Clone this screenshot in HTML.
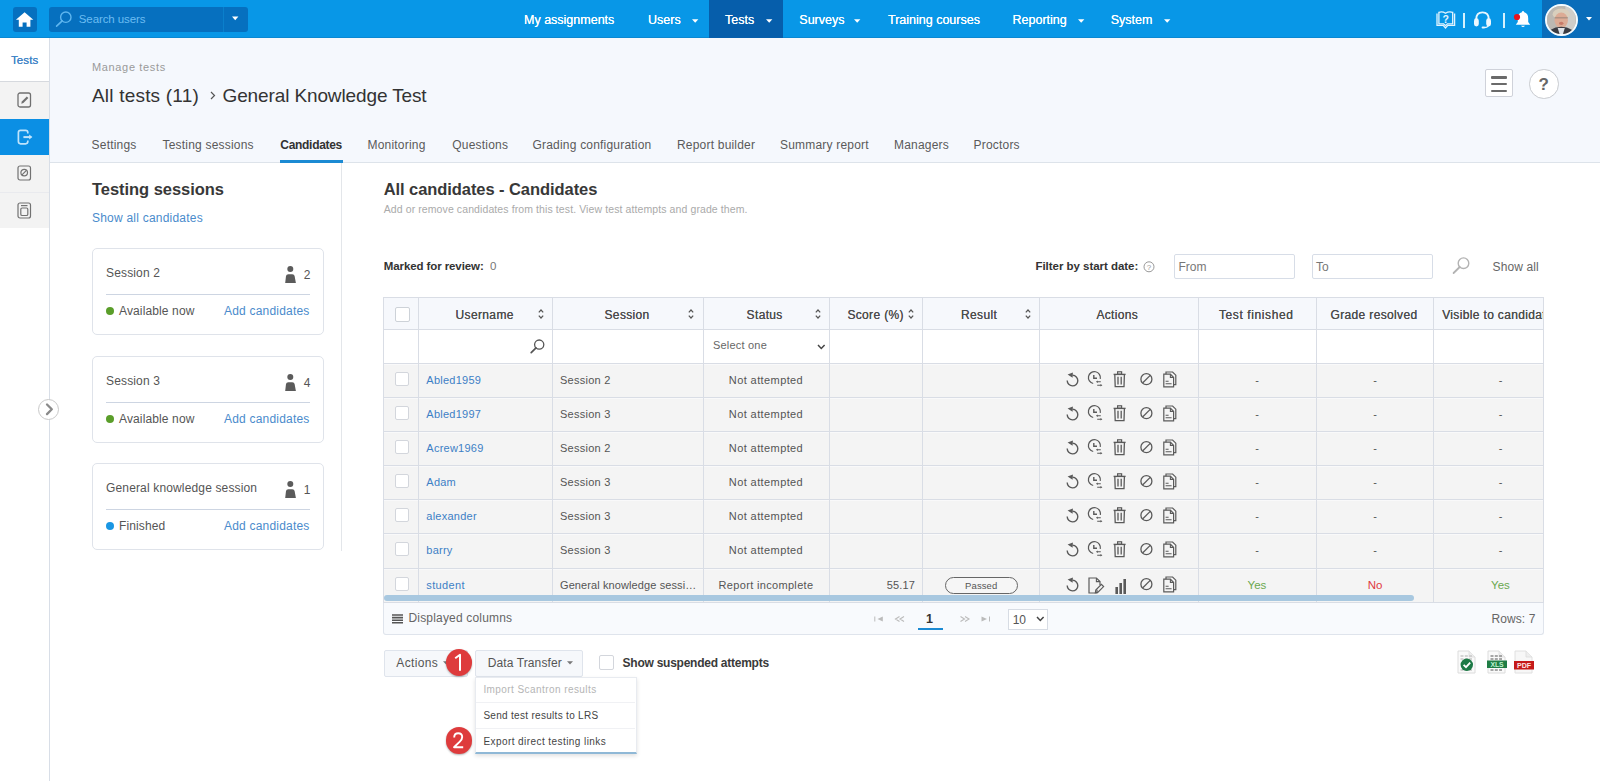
<!DOCTYPE html>
<html><head><meta charset="utf-8"><title>Candidates</title>
<style>
html,body{margin:0;padding:0;width:1600px;height:781px;overflow:hidden;background:#fff;font-family:"Liberation Sans", sans-serif;}
.t{position:absolute;white-space:nowrap;line-height:1;}
.b{position:absolute;box-sizing:border-box;}
svg.b{overflow:visible;}
</style></head><body>
<div class="b" style="left:50px;top:38px;width:1550px;height:124px;background:#f5f8fd;"></div><div class="b" style="left:50px;top:162px;width:1550px;height:1px;background:#dde3ea;"></div><div class="b" style="left:0px;top:38px;width:49px;height:43px;background:#fff;"></div><div class="b" style="left:0px;top:81px;width:49px;height:1px;background:#d6d9de;"></div><div class="b" style="left:0px;top:82px;width:49px;height:37px;background:#f3f3f3;"></div><div class="b" style="left:0px;top:119px;width:49px;height:36px;background:#0b8fe4;"></div><div class="b" style="left:0px;top:155px;width:49px;height:37px;background:#f3f3f3;"></div><div class="b" style="left:0px;top:192px;width:49px;height:1px;background:#e9eaee;"></div><div class="b" style="left:0px;top:193px;width:49px;height:35px;background:#f3f3f3;"></div><div class="b" style="left:49px;top:38px;width:1px;height:743px;background:#d8dee7;"></div><div class="b" style="left:341px;top:163px;width:1px;height:388px;background:#e3e6ea;"></div><div class="b" style="left:0px;top:0px;width:1600px;height:38px;background:#0897e7;"></div><div class="b" style="left:0px;top:37px;width:1600px;height:1px;background:#0a88d2;"></div><div class="b" style="left:13px;top:7px;width:24px;height:25px;background:#0670bf;border-radius:3px;"></div><svg class="b" style="left:13px;top:7px;" width="24" height="25" viewBox="0 0 24 25"><path d="M11.6 5.2 L20.3 12.8 L17.4 12.8 L17.4 19.8 L13.6 19.8 L13.6 15.4 L9.6 15.4 L9.6 19.8 L5.8 19.8 L5.8 12.8 L2.9 12.8 Z" fill="#fff"/></svg><div class="b" style="left:49px;top:7px;width:199px;height:25px;background:#0670bf;border-radius:3px;"></div><div class="b" style="left:223px;top:7px;width:1px;height:25px;background:#0a80cc;"></div><svg class="b" style="left:55px;top:11px;" width="18" height="16" viewBox="0 0 18 16"><circle cx="10.8" cy="6.2" r="5.2" fill="none" stroke="#5fb6ef" stroke-width="1.4"/><path d="M7.2 9.8 L1.6 15.2" stroke="#5fb6ef" stroke-width="1.6" stroke-linecap="round"/></svg><div class="t " style="left:78.8px;top:14.47px;font-size:11.5px;color:#6cbdf2;letter-spacing:-0.1px;">Search users</div><svg class="b" style="left:232px;top:16px;" width="7" height="5" viewBox="0 0 7 5"><path d="M0 0.5 L6.4 0.5 L3.2 4.2 Z" fill="#fff"/></svg><div class="b" style="left:709px;top:0px;width:74px;height:38px;background:#065eab;"></div><div class="t " style="left:524px;top:13.62px;font-size:12.5px;color:#fff;text-shadow:0 0 0.3px #fff;">My assignments</div><div class="t " style="left:648px;top:13.62px;font-size:12.5px;color:#fff;text-shadow:0 0 0.3px #fff;">Users</div><svg class="b" style="left:692px;top:18.5px;" width="7" height="5" viewBox="0 0 7 5"><path d="M0 0.3 L6.4 0.3 L3.2 3.8 Z" fill="#fff"/></svg><div class="t " style="left:725px;top:13.62px;font-size:12.5px;color:#fff;text-shadow:0 0 0.3px #fff;">Tests</div><svg class="b" style="left:766px;top:18.5px;" width="7" height="5" viewBox="0 0 7 5"><path d="M0 0.3 L6.4 0.3 L3.2 3.8 Z" fill="#fff"/></svg><div class="t " style="left:799.3px;top:13.62px;font-size:12.5px;color:#fff;text-shadow:0 0 0.3px #fff;">Surveys</div><svg class="b" style="left:853.5px;top:18.5px;" width="7" height="5" viewBox="0 0 7 5"><path d="M0 0.3 L6.4 0.3 L3.2 3.8 Z" fill="#fff"/></svg><div class="t " style="left:888px;top:13.62px;font-size:12.5px;color:#fff;text-shadow:0 0 0.3px #fff;">Training courses</div><div class="t " style="left:1012.5px;top:13.62px;font-size:12.5px;color:#fff;text-shadow:0 0 0.3px #fff;">Reporting</div><svg class="b" style="left:1078px;top:18.5px;" width="7" height="5" viewBox="0 0 7 5"><path d="M0 0.3 L6.4 0.3 L3.2 3.8 Z" fill="#fff"/></svg><div class="t " style="left:1110.7px;top:13.62px;font-size:12.5px;color:#fff;text-shadow:0 0 0.3px #fff;">System</div><svg class="b" style="left:1163.5px;top:18.5px;" width="7" height="5" viewBox="0 0 7 5"><path d="M0 0.3 L6.4 0.3 L3.2 3.8 Z" fill="#fff"/></svg><svg class="b" style="left:1436px;top:11px;" width="20" height="19" viewBox="0 0 20 19"><path d="M1 2.6 L1 14.4 L7.2 14.4 L9.5 17 L11.8 14.4 L18.6 14.4 L18.6 2.6" fill="none" stroke="#e3f4fe" stroke-width="1.3"/><path d="M2.9 1.3 Q6.4 0.2 9.5 2.2 Q12.6 0.2 16.7 1.3 L16.7 12.8 L11.4 12.8 L9.5 14.6 L7.6 12.8 L2.9 12.8 Z" fill="none" stroke="#e3f4fe" stroke-width="1.3"/><text x="9.7" y="11.8" font-size="10.5" font-weight="bold" font-family="Liberation Sans" fill="#e3f4fe" text-anchor="middle">?</text></svg><div class="b" style="left:1463px;top:13px;width:2px;height:14.5px;background:#d5f1fd;"></div><svg class="b" style="left:1473px;top:11px;" width="19" height="18" viewBox="0 0 19 18"><path d="M3.2 10 L3.2 8.6 Q3.2 1.4 9.5 1.4 Q15.8 1.4 15.8 8.6 L15.8 10" fill="none" stroke="#e8f6fe" stroke-width="1.9"/><rect x="1" y="7.3" width="4.8" height="8.2" rx="2.4" fill="#eef8fe"/><rect x="13.2" y="7.3" width="4.8" height="8.2" rx="2.4" fill="#eef8fe"/><path d="M15.6 14 Q15.2 16.4 11 16.6" fill="none" stroke="#e8f6fe" stroke-width="1.5"/><rect x="8.6" y="15.6" width="3.2" height="2" rx="1" fill="#e8f6fe"/></svg><div class="b" style="left:1503px;top:13px;width:2px;height:14.5px;background:#d5f1fd;"></div><svg class="b" style="left:1515px;top:10px;" width="16" height="19" viewBox="0 0 16 19"><path d="M8 1 Q9 1 9.1 2.3 Q13.2 3.4 13.2 8.4 L13.2 12 L15.2 14.8 L0.8 14.8 L2.8 12 L2.8 8.4 Q2.8 3.4 6.9 2.3 Q7 1 8 1 Z" fill="#fdfeff"/><path d="M6 15.8 Q8 18.4 10 15.8 Z" fill="#fdfeff"/><circle cx="2" cy="7" r="3.1" fill="#e8141c"/></svg><div class="b" style="left:1542px;top:0px;width:58px;height:38px;background:#0a6dba;"></div><div class="b" style="left:1545px;top:3.5px;width:32.5px;height:32.5px;border-radius:50%;border:2px solid #f4fbff;background:#bdb9b4;overflow:hidden;"><svg width="28.5" height="28.5" viewBox="0 0 28 28" style="position:absolute;left:0;top:0;filter:blur(0.5px)"><rect x="0" y="0" width="28" height="28" fill="#bcb8b2"/><rect x="18" y="0" width="10" height="28" fill="#cfcdc9"/><ellipse cx="14" cy="8" rx="8.5" ry="5.5" fill="#d9cfbd"/><ellipse cx="14" cy="14" rx="6.6" ry="7.6" fill="#dcab95"/><rect x="7.5" y="10.8" width="13" height="1.5" fill="#8d7d74" opacity="0.55"/><ellipse cx="14" cy="17" rx="2.2" ry="1.6" fill="#c87a68"/><ellipse cx="14" cy="30" rx="14.5" ry="9.5" fill="#3b3c43"/><path d="M10.5 21.5 L17.5 21.5 L15.5 28 L12.5 28 Z" fill="#dfe3e8"/></svg></div><svg class="b" style="left:1586px;top:16.5px;" width="7" height="4" viewBox="0 0 7 4"><path d="M0 0 L6 0 L3 3.6 Z" fill="#fff"/></svg><div class="t " style="left:11px;top:54.57px;font-size:11.5px;color:#4184c6;letter-spacing:0.1px;text-shadow:0 0 0.4px #4184c6;">Tests</div><svg class="b" style="left:17px;top:92px;" width="15" height="16" viewBox="0 0 15 16"><rect x="1" y="1" width="12.5" height="14" rx="2" fill="none" stroke="#707070" stroke-width="1.3"/><path d="M4.3 11.8 L4.8 9.4 L9.8 4.4 L11.4 6 L6.4 11 Z" fill="#707070"/></svg><svg class="b" style="left:17px;top:129px;" width="17" height="17" viewBox="0 0 17 17"><path d="M10.8 4.6 L10.8 3.6 Q10.8 1.4 8.6 1.4 L3.6 1.4 Q1.4 1.4 1.4 3.6 L1.4 12.6 Q1.4 14.8 3.6 14.8 L8.6 14.8 Q10.8 14.8 10.8 12.6 L10.8 11.4" fill="none" stroke="#bfe4fc" stroke-width="1.7"/><path d="M6.4 8.1 L14.2 8.1" stroke="#bfe4fc" stroke-width="2"/><path d="M12.2 5.6 L15.4 8.1 L12.2 10.6 Z" fill="#bfe4fc"/></svg><svg class="b" style="left:17px;top:165px;" width="15" height="16" viewBox="0 0 15 16"><rect x="1" y="1" width="12.5" height="14" rx="2" fill="none" stroke="#727272" stroke-width="1.2"/><circle cx="7.2" cy="7.6" r="3.3" fill="none" stroke="#727272" stroke-width="1.2"/><path d="M5 9.8 L9.4 5.4" stroke="#727272" stroke-width="1.2"/></svg><svg class="b" style="left:17px;top:202px;" width="15" height="17" viewBox="0 0 15 17"><rect x="1" y="1" width="12.5" height="15" rx="2" fill="none" stroke="#727272" stroke-width="1.2"/><path d="M4 3.6 L10.5 3.6" stroke="#727272" stroke-width="1.2"/><rect x="3.8" y="6" width="7" height="7.5" rx="1.3" fill="none" stroke="#727272" stroke-width="1.2"/></svg><div class="b" style="left:38px;top:399px;width:21px;height:21px;border-radius:50%;border:1px solid #c9c9c9;background:#fff;"></div><svg class="b" style="left:45px;top:403px;" width="9" height="13" viewBox="0 0 9 13"><path d="M2 1.5 L6.8 6.3 L2 11.1" fill="none" stroke="#8a8a8a" stroke-width="2.3" stroke-linecap="round" stroke-linejoin="round"/></svg><div class="t " style="left:92px;top:62.09px;font-size:11px;color:#9a9a9a;letter-spacing:0.65px;">Manage tests</div><div class="t " style="left:92px;top:85.72px;font-size:19px;color:#333;letter-spacing:0.2px;">All tests (11)</div><svg class="b" style="left:210px;top:91px;" width="6" height="9" viewBox="0 0 6 9"><path d="M1 1 L4.5 4.5 L1 8" fill="none" stroke="#555" stroke-width="1.2"/></svg><div class="t " style="left:222.5px;top:85.72px;font-size:19px;color:#333;letter-spacing:-0.12px;">General Knowledge Test</div><div class="b" style="left:1485px;top:69px;width:28px;height:28px;background:#fff;border:1px solid #cfd2da;border-radius:2px;"></div><div class="b" style="left:1491px;top:76px;width:15.5px;height:2.6px;background:#6a6a6a;border-radius:1px;"></div><div class="b" style="left:1491px;top:82.8px;width:15.5px;height:2.6px;background:#6a6a6a;border-radius:1px;"></div><div class="b" style="left:1491px;top:89.5px;width:15.5px;height:2.6px;background:#6a6a6a;border-radius:1px;"></div><div class="b" style="left:1529px;top:69px;width:29.5px;height:29.5px;border-radius:50%;border:1px solid #c8cbd0;background:#fff;"></div><div class="t " style="left:1529px;top:76.11px;font-size:17px;color:#666;font-weight:bold;width:29.5px;text-align:center;">?</div><div class="t " style="left:91.6px;top:139.04px;font-size:12px;color:#5a5a5a;letter-spacing:0.2px;">Settings</div><div class="t " style="left:162.5px;top:139.04px;font-size:12px;color:#5a5a5a;letter-spacing:0.2px;">Testing sessions</div><div class="t " style="left:280.3px;top:139.04px;font-size:12px;color:#333;font-weight:bold;letter-spacing:-0.3px;">Candidates</div><div class="t " style="left:367.5px;top:139.04px;font-size:12px;color:#5a5a5a;letter-spacing:0.2px;">Monitoring</div><div class="t " style="left:452.3px;top:139.04px;font-size:12px;color:#5a5a5a;letter-spacing:0.2px;">Questions</div><div class="t " style="left:532.5px;top:139.04px;font-size:12px;color:#5a5a5a;letter-spacing:0.2px;">Grading configuration</div><div class="t " style="left:677px;top:139.04px;font-size:12px;color:#5a5a5a;letter-spacing:0.2px;">Report builder</div><div class="t " style="left:780px;top:139.04px;font-size:12px;color:#5a5a5a;letter-spacing:0.2px;">Summary report</div><div class="t " style="left:894px;top:139.04px;font-size:12px;color:#5a5a5a;letter-spacing:0.2px;">Managers</div><div class="t " style="left:973.5px;top:139.04px;font-size:12px;color:#5a5a5a;letter-spacing:0.2px;">Proctors</div><div class="b" style="left:280px;top:160px;width:63px;height:2.5px;background:#1b8ad3;"></div><div class="t " style="left:92px;top:181.33px;font-size:16.5px;color:#383838;font-weight:bold;letter-spacing:-0.05px;">Testing sessions</div><div class="t " style="left:92px;top:211.84px;font-size:12px;color:#4a8bcc;letter-spacing:0.22px;">Show all candidates</div><div class="b" style="left:92px;top:248px;width:232px;height:87px;border:1px solid #dfe3ea;border-radius:5px;background:#fff;"></div><div class="t " style="left:106px;top:266.84px;font-size:12px;color:#555;letter-spacing:0.15px;">Session 2</div><svg class="b" style="left:285px;top:266px;" width="12" height="17" viewBox="0 0 12 17"><circle cx="5.3" cy="3.1" r="3" fill="#5b5b5b"/><path d="M0.2 17 L1.0 10 Q1.3 8.2 3.3 8.2 L7.3 8.2 Q9.3 8.2 9.6 10 L10.9 17 Z" fill="#5b5b5b"/></svg><div class="t " style="left:303.7px;top:268.84px;font-size:12px;color:#555;">2</div><div class="b" style="left:106px;top:294px;width:204px;height:1px;background:#cdd5e2;"></div><div class="b" style="left:106px;top:307px;width:8px;height:8px;border-radius:50%;background:#5a9e2a;"></div><div class="t " style="left:119px;top:304.84px;font-size:12px;color:#555;letter-spacing:0.13px;">Available now</div><div class="t " style="left:160px;top:304.84px;font-size:12px;color:#4a8bcc;letter-spacing:0.2px;width:149.5px;text-align:right;">Add candidates</div><div class="b" style="left:92px;top:356px;width:232px;height:87px;border:1px solid #dfe3ea;border-radius:5px;background:#fff;"></div><div class="t " style="left:106px;top:374.84px;font-size:12px;color:#555;letter-spacing:0.15px;">Session 3</div><svg class="b" style="left:285px;top:374px;" width="12" height="17" viewBox="0 0 12 17"><circle cx="5.3" cy="3.1" r="3" fill="#5b5b5b"/><path d="M0.2 17 L1.0 10 Q1.3 8.2 3.3 8.2 L7.3 8.2 Q9.3 8.2 9.6 10 L10.9 17 Z" fill="#5b5b5b"/></svg><div class="t " style="left:303.7px;top:376.84px;font-size:12px;color:#555;">4</div><div class="b" style="left:106px;top:402px;width:204px;height:1px;background:#cdd5e2;"></div><div class="b" style="left:106px;top:415px;width:8px;height:8px;border-radius:50%;background:#5a9e2a;"></div><div class="t " style="left:119px;top:412.84px;font-size:12px;color:#555;letter-spacing:0.13px;">Available now</div><div class="t " style="left:160px;top:412.84px;font-size:12px;color:#4a8bcc;letter-spacing:0.2px;width:149.5px;text-align:right;">Add candidates</div><div class="b" style="left:92px;top:463px;width:232px;height:87px;border:1px solid #dfe3ea;border-radius:5px;background:#fff;"></div><div class="t " style="left:106px;top:481.84px;font-size:12px;color:#555;letter-spacing:0.15px;">General knowledge session</div><svg class="b" style="left:285px;top:481px;" width="12" height="17" viewBox="0 0 12 17"><circle cx="5.3" cy="3.1" r="3" fill="#5b5b5b"/><path d="M0.2 17 L1.0 10 Q1.3 8.2 3.3 8.2 L7.3 8.2 Q9.3 8.2 9.6 10 L10.9 17 Z" fill="#5b5b5b"/></svg><div class="t " style="left:303.7px;top:483.84px;font-size:12px;color:#555;">1</div><div class="b" style="left:106px;top:509px;width:204px;height:1px;background:#cdd5e2;"></div><div class="b" style="left:106px;top:522px;width:8px;height:8px;border-radius:50%;background:#1a96e3;"></div><div class="t " style="left:119px;top:519.84px;font-size:12px;color:#555;letter-spacing:0.13px;">Finished</div><div class="t " style="left:160px;top:519.84px;font-size:12px;color:#4a8bcc;letter-spacing:0.2px;width:149.5px;text-align:right;">Add candidates</div><div class="t " style="left:383.7px;top:181.23px;font-size:16.5px;color:#383838;font-weight:bold;letter-spacing:-0.07px;">All candidates - Candidates</div><div class="t " style="left:383.7px;top:203.61px;font-size:10.5px;color:#aaa;letter-spacing:0.1px;">Add or remove candidates from this test. View test attempts and grade them.</div><div class="t " style="left:383.8px;top:260.97px;font-size:11.5px;color:#333;font-weight:bold;letter-spacing:-0.1px;">Marked for review:</div><div class="t " style="left:490px;top:261.47px;font-size:11.5px;color:#777;">0</div><div class="t " style="left:1035.4px;top:260.67px;font-size:11.5px;color:#333;font-weight:bold;letter-spacing:-0.03px;">Filter by start date:</div><svg class="b" style="left:1143px;top:261px;" width="12" height="12" viewBox="0 0 12 12"><circle cx="6" cy="5.8" r="5" fill="none" stroke="#999" stroke-width="1"/><text x="6" y="9" font-size="8" font-family="Liberation Sans" fill="#999" text-anchor="middle">?</text></svg><div class="b" style="left:1174px;top:254px;width:121px;height:24.5px;border:1px solid #d7dde7;border-radius:2px;background:#fff;"></div><div class="t " style="left:1178.5px;top:260.84px;font-size:12px;color:#777;">From</div><div class="b" style="left:1312px;top:254px;width:120.5px;height:24.5px;border:1px solid #d7dde7;border-radius:2px;background:#fff;"></div><div class="t " style="left:1316px;top:260.84px;font-size:12px;color:#777;">To</div><svg class="b" style="left:1452px;top:257px;" width="18" height="17" viewBox="0 0 18 17"><circle cx="11.5" cy="6.2" r="5.3" fill="none" stroke="#b3b3b3" stroke-width="1.4"/><path d="M7.7 10 L1.6 16" stroke="#b3b3b3" stroke-width="1.8" stroke-linecap="round"/></svg><div class="t " style="left:1492.6px;top:260.84px;font-size:12px;color:#666;letter-spacing:0.1px;">Show all</div><div class="b" style="left:383px;top:297px;width:1160px;height:33px;background:#f6f8fc;"></div><div class="b" style="left:383px;top:330px;width:1160px;height:33px;background:#fff;"></div><div class="b" style="left:383px;top:363px;width:1160px;height:239px;background:#f4f4f4;"></div><div class="b" style="left:383px;top:602px;width:1161px;height:33px;background:#f8fafd;border:1px solid #dfe4ec;border-top:none;border-radius:0 0 3px 3px;"></div><div class="b" style="left:383px;top:297px;width:1161px;height:1px;background:#d9dde5;"></div><div class="b" style="left:383px;top:329px;width:1161px;height:1px;background:#d9dde5;"></div><div class="b" style="left:383px;top:363px;width:1161px;height:1px;background:#d9dde5;"></div><div class="b" style="left:383px;top:397px;width:1161px;height:1px;background:#d9dde5;"></div><div class="b" style="left:383px;top:431px;width:1161px;height:1px;background:#d9dde5;"></div><div class="b" style="left:383px;top:465px;width:1161px;height:1px;background:#d9dde5;"></div><div class="b" style="left:383px;top:499px;width:1161px;height:1px;background:#d9dde5;"></div><div class="b" style="left:383px;top:533px;width:1161px;height:1px;background:#d9dde5;"></div><div class="b" style="left:383px;top:568px;width:1161px;height:1px;background:#d9dde5;"></div><div class="b" style="left:383px;top:602px;width:1161px;height:1px;background:#d9dde5;"></div><div class="b" style="left:383px;top:364px;width:1161px;height:1px;background:#f9f9fa;"></div><div class="b" style="left:383px;top:398px;width:1161px;height:1px;background:#f9f9fa;"></div><div class="b" style="left:383px;top:432px;width:1161px;height:1px;background:#f9f9fa;"></div><div class="b" style="left:383px;top:466px;width:1161px;height:1px;background:#f9f9fa;"></div><div class="b" style="left:383px;top:500px;width:1161px;height:1px;background:#f9f9fa;"></div><div class="b" style="left:383px;top:534px;width:1161px;height:1px;background:#f9f9fa;"></div><div class="b" style="left:383px;top:569px;width:1161px;height:1px;background:#f9f9fa;"></div><div class="b" style="left:383px;top:297px;width:1px;height:305px;background:#d9dde5;"></div><div class="b" style="left:418px;top:297px;width:1px;height:305px;background:#d9dde5;"></div><div class="b" style="left:552px;top:297px;width:1px;height:305px;background:#d9dde5;"></div><div class="b" style="left:703px;top:297px;width:1px;height:305px;background:#d9dde5;"></div><div class="b" style="left:829px;top:297px;width:1px;height:305px;background:#d9dde5;"></div><div class="b" style="left:922px;top:297px;width:1px;height:305px;background:#d9dde5;"></div><div class="b" style="left:1039px;top:297px;width:1px;height:305px;background:#d9dde5;"></div><div class="b" style="left:1198px;top:297px;width:1px;height:305px;background:#d9dde5;"></div><div class="b" style="left:1316px;top:297px;width:1px;height:305px;background:#d9dde5;"></div><div class="b" style="left:1433px;top:297px;width:1px;height:305px;background:#d9dde5;"></div><div class="b" style="left:1543px;top:297px;width:1px;height:305px;background:#d9dde5;"></div><div class="b" style="left:395px;top:307px;width:14.5px;height:14.5px;border:1px solid #cdd2d8;border-radius:2px;background:#fff;"></div><div class="t " style="left:455.6px;top:308.84px;font-size:12px;color:#4d4d4d;letter-spacing:0.35px;text-shadow:0 0 0.1px #4d4d4d;">Username</div><svg class="b" style="left:538.4px;top:309px;" width="6" height="10" viewBox="0 0 6 10"><path d="M0.8 3.4 L3 1 L5.2 3.4 M0.8 6.6 L3 9 L5.2 6.6" fill="none" stroke="#555" stroke-width="1.2"/></svg><div class="t " style="left:604.5px;top:308.84px;font-size:12px;color:#4d4d4d;letter-spacing:0.35px;text-shadow:0 0 0.1px #4d4d4d;">Session</div><svg class="b" style="left:688px;top:309px;" width="6" height="10" viewBox="0 0 6 10"><path d="M0.8 3.4 L3 1 L5.2 3.4 M0.8 6.6 L3 9 L5.2 6.6" fill="none" stroke="#555" stroke-width="1.2"/></svg><div class="t " style="left:746.6px;top:308.84px;font-size:12px;color:#4d4d4d;letter-spacing:0.35px;text-shadow:0 0 0.1px #4d4d4d;">Status</div><svg class="b" style="left:815px;top:309px;" width="6" height="10" viewBox="0 0 6 10"><path d="M0.8 3.4 L3 1 L5.2 3.4 M0.8 6.6 L3 9 L5.2 6.6" fill="none" stroke="#555" stroke-width="1.2"/></svg><div class="t " style="left:847.4px;top:308.84px;font-size:12px;color:#4d4d4d;letter-spacing:0.35px;text-shadow:0 0 0.1px #4d4d4d;">Score (%)</div><svg class="b" style="left:907.6px;top:309px;" width="6" height="10" viewBox="0 0 6 10"><path d="M0.8 3.4 L3 1 L5.2 3.4 M0.8 6.6 L3 9 L5.2 6.6" fill="none" stroke="#555" stroke-width="1.2"/></svg><div class="t " style="left:961px;top:308.84px;font-size:12px;color:#4d4d4d;letter-spacing:0.35px;text-shadow:0 0 0.1px #4d4d4d;">Result</div><svg class="b" style="left:1025px;top:309px;" width="6" height="10" viewBox="0 0 6 10"><path d="M0.8 3.4 L3 1 L5.2 3.4 M0.8 6.6 L3 9 L5.2 6.6" fill="none" stroke="#555" stroke-width="1.2"/></svg><div class="t " style="left:1096.4px;top:308.84px;font-size:12px;color:#4d4d4d;letter-spacing:0.35px;text-shadow:0 0 0.1px #4d4d4d;">Actions</div><div class="t " style="left:1219px;top:308.84px;font-size:12px;color:#4d4d4d;letter-spacing:0.6px;text-shadow:0 0 0.1px #4d4d4d;">Test finished</div><div class="t " style="left:1330.5px;top:308.84px;font-size:12px;color:#4d4d4d;letter-spacing:0.35px;text-shadow:0 0 0.1px #4d4d4d;">Grade resolved</div><div class="t " style="left:1442.2px;top:308.84px;font-size:12px;color:#4d4d4d;letter-spacing:0.35px;text-shadow:0 0 0.1px #4d4d4d;">Visible to candidates</div><div class="b" style="left:1543px;top:297px;width:57px;height:305px;background:#fff;"></div><div class="b" style="left:1543px;top:297px;width:1px;height:305px;background:#d9dde5;"></div><svg class="b" style="left:530px;top:339px;" width="15" height="15" viewBox="0 0 15 15"><circle cx="9.2" cy="5.6" r="4.6" fill="none" stroke="#555" stroke-width="1.3"/><path d="M6 8.9 L1.2 13.7" stroke="#555" stroke-width="1.7" stroke-linecap="round"/></svg><div class="t " style="left:713px;top:340.39px;font-size:11px;color:#666;letter-spacing:0.2px;">Select one</div><svg class="b" style="left:817px;top:343.5px;" width="9" height="6" viewBox="0 0 9 6"><path d="M1 1 L4.3 4.4 L7.6 1" fill="none" stroke="#444" stroke-width="1.5"/></svg><div class="b" style="left:394.5px;top:371.5px;width:14.5px;height:14.5px;border:1px solid #d3d6dc;border-radius:2px;background:#fff;"></div><div class="t " style="left:426.3px;top:374.69px;font-size:11px;color:#3d7fc6;letter-spacing:0.25px;">Abled1959</div><div class="t " style="left:560px;top:374.69px;font-size:11px;color:#555;letter-spacing:0.25px;">Session 2</div><div class="t " style="left:703px;top:374.69px;font-size:11px;color:#555;letter-spacing:0.4px;width:126px;text-align:center;">Not attempted</div><svg class="b" style="left:1066px;top:372px;" width="14" height="15" viewBox="0 0 14 15"><path d="M1.2 8.6 A5.3 5.3 0 1 0 6.6 3.3" fill="none" stroke="#5a5a5a" stroke-width="1.4"/><path d="M1.6 2.4 L6.9 0.4 L6.6 5.8 Z" fill="#5a5a5a"/></svg><svg class="b" style="left:1088px;top:368px;" width="16" height="20" viewBox="0 0 16 20"><path d="M12.3 10.8 A6 6 0 1 0 5.2 15.5" fill="none" stroke="#5a5a5a" stroke-width="1.25"/><path d="M5.8 7.0 L5.8 10.3 L9.0 10.3" fill="none" stroke="#5a5a5a" stroke-width="1.4"/><path d="M9.2 13.8 L12.8 13.8 M9.2 17.2 L13.2 17.2" stroke="#5a5a5a" stroke-width="1.1"/><path d="M7.9 13.8 L9.8 12.5 L9.8 15.1 Z M14.4 17.2 L12.5 15.9 L12.5 18.5 Z" fill="#5a5a5a"/></svg><svg class="b" style="left:1113px;top:371px;" width="14" height="17" viewBox="0 0 14 17"><rect x="4.6" y="0.8" width="4" height="2.4" fill="none" stroke="#5a5a5a" stroke-width="1.2"/><path d="M0.6 3.4 L12.6 3.4" stroke="#5a5a5a" stroke-width="1.4"/><path d="M1.8 3.4 L2.2 15.6 L11 15.6 L11.4 3.4" fill="none" stroke="#5a5a5a" stroke-width="1.3"/><path d="M5 5.8 L5 13.4 M8.2 5.8 L8.2 13.4" stroke="#5a5a5a" stroke-width="1.3"/></svg><svg class="b" style="left:1139.5px;top:372.8px;" width="13" height="13" viewBox="0 0 13 13"><circle cx="6.4" cy="6.2" r="5.5" fill="none" stroke="#5a5a5a" stroke-width="1.3"/><path d="M2.6 10 L10.2 2.4" stroke="#5a5a5a" stroke-width="1.3"/></svg><svg class="b" style="left:1162.5px;top:371px;" width="14" height="17" viewBox="0 0 14 17"><path d="M0.8 3.2 L7.4 3.2 L10.6 6.4 L10.6 15.8 L0.8 15.8 Z" fill="none" stroke="#5a5a5a" stroke-width="1.2"/><path d="M3 3.2 L3 1 L9.6 1 L12.8 4.2 L12.8 13.6 L10.6 13.6" fill="none" stroke="#5a5a5a" stroke-width="1.2"/><path d="M7.4 3.2 L7.4 6.4 L10.6 6.4" fill="none" stroke="#5a5a5a" stroke-width="1.1"/><path d="M2.6 10.2 L5.6 10.2 M2.6 12.8 L8.6 12.8" stroke="#5a5a5a" stroke-width="1.1"/></svg><div class="t " style="left:1247px;top:374.69px;font-size:11px;color:#555;width:20px;text-align:center;">-</div><div class="t " style="left:1365px;top:374.69px;font-size:11px;color:#555;width:20px;text-align:center;">-</div><div class="t " style="left:1490.5px;top:374.69px;font-size:11px;color:#555;width:20px;text-align:center;">-</div><div class="b" style="left:394.5px;top:405.5px;width:14.5px;height:14.5px;border:1px solid #d3d6dc;border-radius:2px;background:#fff;"></div><div class="t " style="left:426.3px;top:408.69px;font-size:11px;color:#3d7fc6;letter-spacing:0.25px;">Abled1997</div><div class="t " style="left:560px;top:408.69px;font-size:11px;color:#555;letter-spacing:0.25px;">Session 3</div><div class="t " style="left:703px;top:408.69px;font-size:11px;color:#555;letter-spacing:0.4px;width:126px;text-align:center;">Not attempted</div><svg class="b" style="left:1066px;top:406px;" width="14" height="15" viewBox="0 0 14 15"><path d="M1.2 8.6 A5.3 5.3 0 1 0 6.6 3.3" fill="none" stroke="#5a5a5a" stroke-width="1.4"/><path d="M1.6 2.4 L6.9 0.4 L6.6 5.8 Z" fill="#5a5a5a"/></svg><svg class="b" style="left:1088px;top:402px;" width="16" height="20" viewBox="0 0 16 20"><path d="M12.3 10.8 A6 6 0 1 0 5.2 15.5" fill="none" stroke="#5a5a5a" stroke-width="1.25"/><path d="M5.8 7.0 L5.8 10.3 L9.0 10.3" fill="none" stroke="#5a5a5a" stroke-width="1.4"/><path d="M9.2 13.8 L12.8 13.8 M9.2 17.2 L13.2 17.2" stroke="#5a5a5a" stroke-width="1.1"/><path d="M7.9 13.8 L9.8 12.5 L9.8 15.1 Z M14.4 17.2 L12.5 15.9 L12.5 18.5 Z" fill="#5a5a5a"/></svg><svg class="b" style="left:1113px;top:405px;" width="14" height="17" viewBox="0 0 14 17"><rect x="4.6" y="0.8" width="4" height="2.4" fill="none" stroke="#5a5a5a" stroke-width="1.2"/><path d="M0.6 3.4 L12.6 3.4" stroke="#5a5a5a" stroke-width="1.4"/><path d="M1.8 3.4 L2.2 15.6 L11 15.6 L11.4 3.4" fill="none" stroke="#5a5a5a" stroke-width="1.3"/><path d="M5 5.8 L5 13.4 M8.2 5.8 L8.2 13.4" stroke="#5a5a5a" stroke-width="1.3"/></svg><svg class="b" style="left:1139.5px;top:406.8px;" width="13" height="13" viewBox="0 0 13 13"><circle cx="6.4" cy="6.2" r="5.5" fill="none" stroke="#5a5a5a" stroke-width="1.3"/><path d="M2.6 10 L10.2 2.4" stroke="#5a5a5a" stroke-width="1.3"/></svg><svg class="b" style="left:1162.5px;top:405px;" width="14" height="17" viewBox="0 0 14 17"><path d="M0.8 3.2 L7.4 3.2 L10.6 6.4 L10.6 15.8 L0.8 15.8 Z" fill="none" stroke="#5a5a5a" stroke-width="1.2"/><path d="M3 3.2 L3 1 L9.6 1 L12.8 4.2 L12.8 13.6 L10.6 13.6" fill="none" stroke="#5a5a5a" stroke-width="1.2"/><path d="M7.4 3.2 L7.4 6.4 L10.6 6.4" fill="none" stroke="#5a5a5a" stroke-width="1.1"/><path d="M2.6 10.2 L5.6 10.2 M2.6 12.8 L8.6 12.8" stroke="#5a5a5a" stroke-width="1.1"/></svg><div class="t " style="left:1247px;top:408.69px;font-size:11px;color:#555;width:20px;text-align:center;">-</div><div class="t " style="left:1365px;top:408.69px;font-size:11px;color:#555;width:20px;text-align:center;">-</div><div class="t " style="left:1490.5px;top:408.69px;font-size:11px;color:#555;width:20px;text-align:center;">-</div><div class="b" style="left:394.5px;top:439.5px;width:14.5px;height:14.5px;border:1px solid #d3d6dc;border-radius:2px;background:#fff;"></div><div class="t " style="left:426.3px;top:442.69px;font-size:11px;color:#3d7fc6;letter-spacing:0.25px;">Acrew1969</div><div class="t " style="left:560px;top:442.69px;font-size:11px;color:#555;letter-spacing:0.25px;">Session 2</div><div class="t " style="left:703px;top:442.69px;font-size:11px;color:#555;letter-spacing:0.4px;width:126px;text-align:center;">Not attempted</div><svg class="b" style="left:1066px;top:440px;" width="14" height="15" viewBox="0 0 14 15"><path d="M1.2 8.6 A5.3 5.3 0 1 0 6.6 3.3" fill="none" stroke="#5a5a5a" stroke-width="1.4"/><path d="M1.6 2.4 L6.9 0.4 L6.6 5.8 Z" fill="#5a5a5a"/></svg><svg class="b" style="left:1088px;top:436px;" width="16" height="20" viewBox="0 0 16 20"><path d="M12.3 10.8 A6 6 0 1 0 5.2 15.5" fill="none" stroke="#5a5a5a" stroke-width="1.25"/><path d="M5.8 7.0 L5.8 10.3 L9.0 10.3" fill="none" stroke="#5a5a5a" stroke-width="1.4"/><path d="M9.2 13.8 L12.8 13.8 M9.2 17.2 L13.2 17.2" stroke="#5a5a5a" stroke-width="1.1"/><path d="M7.9 13.8 L9.8 12.5 L9.8 15.1 Z M14.4 17.2 L12.5 15.9 L12.5 18.5 Z" fill="#5a5a5a"/></svg><svg class="b" style="left:1113px;top:439px;" width="14" height="17" viewBox="0 0 14 17"><rect x="4.6" y="0.8" width="4" height="2.4" fill="none" stroke="#5a5a5a" stroke-width="1.2"/><path d="M0.6 3.4 L12.6 3.4" stroke="#5a5a5a" stroke-width="1.4"/><path d="M1.8 3.4 L2.2 15.6 L11 15.6 L11.4 3.4" fill="none" stroke="#5a5a5a" stroke-width="1.3"/><path d="M5 5.8 L5 13.4 M8.2 5.8 L8.2 13.4" stroke="#5a5a5a" stroke-width="1.3"/></svg><svg class="b" style="left:1139.5px;top:440.8px;" width="13" height="13" viewBox="0 0 13 13"><circle cx="6.4" cy="6.2" r="5.5" fill="none" stroke="#5a5a5a" stroke-width="1.3"/><path d="M2.6 10 L10.2 2.4" stroke="#5a5a5a" stroke-width="1.3"/></svg><svg class="b" style="left:1162.5px;top:439px;" width="14" height="17" viewBox="0 0 14 17"><path d="M0.8 3.2 L7.4 3.2 L10.6 6.4 L10.6 15.8 L0.8 15.8 Z" fill="none" stroke="#5a5a5a" stroke-width="1.2"/><path d="M3 3.2 L3 1 L9.6 1 L12.8 4.2 L12.8 13.6 L10.6 13.6" fill="none" stroke="#5a5a5a" stroke-width="1.2"/><path d="M7.4 3.2 L7.4 6.4 L10.6 6.4" fill="none" stroke="#5a5a5a" stroke-width="1.1"/><path d="M2.6 10.2 L5.6 10.2 M2.6 12.8 L8.6 12.8" stroke="#5a5a5a" stroke-width="1.1"/></svg><div class="t " style="left:1247px;top:442.69px;font-size:11px;color:#555;width:20px;text-align:center;">-</div><div class="t " style="left:1365px;top:442.69px;font-size:11px;color:#555;width:20px;text-align:center;">-</div><div class="t " style="left:1490.5px;top:442.69px;font-size:11px;color:#555;width:20px;text-align:center;">-</div><div class="b" style="left:394.5px;top:473.5px;width:14.5px;height:14.5px;border:1px solid #d3d6dc;border-radius:2px;background:#fff;"></div><div class="t " style="left:426.3px;top:476.69px;font-size:11px;color:#3d7fc6;letter-spacing:0.25px;">Adam</div><div class="t " style="left:560px;top:476.69px;font-size:11px;color:#555;letter-spacing:0.25px;">Session 3</div><div class="t " style="left:703px;top:476.69px;font-size:11px;color:#555;letter-spacing:0.4px;width:126px;text-align:center;">Not attempted</div><svg class="b" style="left:1066px;top:474px;" width="14" height="15" viewBox="0 0 14 15"><path d="M1.2 8.6 A5.3 5.3 0 1 0 6.6 3.3" fill="none" stroke="#5a5a5a" stroke-width="1.4"/><path d="M1.6 2.4 L6.9 0.4 L6.6 5.8 Z" fill="#5a5a5a"/></svg><svg class="b" style="left:1088px;top:470px;" width="16" height="20" viewBox="0 0 16 20"><path d="M12.3 10.8 A6 6 0 1 0 5.2 15.5" fill="none" stroke="#5a5a5a" stroke-width="1.25"/><path d="M5.8 7.0 L5.8 10.3 L9.0 10.3" fill="none" stroke="#5a5a5a" stroke-width="1.4"/><path d="M9.2 13.8 L12.8 13.8 M9.2 17.2 L13.2 17.2" stroke="#5a5a5a" stroke-width="1.1"/><path d="M7.9 13.8 L9.8 12.5 L9.8 15.1 Z M14.4 17.2 L12.5 15.9 L12.5 18.5 Z" fill="#5a5a5a"/></svg><svg class="b" style="left:1113px;top:473px;" width="14" height="17" viewBox="0 0 14 17"><rect x="4.6" y="0.8" width="4" height="2.4" fill="none" stroke="#5a5a5a" stroke-width="1.2"/><path d="M0.6 3.4 L12.6 3.4" stroke="#5a5a5a" stroke-width="1.4"/><path d="M1.8 3.4 L2.2 15.6 L11 15.6 L11.4 3.4" fill="none" stroke="#5a5a5a" stroke-width="1.3"/><path d="M5 5.8 L5 13.4 M8.2 5.8 L8.2 13.4" stroke="#5a5a5a" stroke-width="1.3"/></svg><svg class="b" style="left:1139.5px;top:474.8px;" width="13" height="13" viewBox="0 0 13 13"><circle cx="6.4" cy="6.2" r="5.5" fill="none" stroke="#5a5a5a" stroke-width="1.3"/><path d="M2.6 10 L10.2 2.4" stroke="#5a5a5a" stroke-width="1.3"/></svg><svg class="b" style="left:1162.5px;top:473px;" width="14" height="17" viewBox="0 0 14 17"><path d="M0.8 3.2 L7.4 3.2 L10.6 6.4 L10.6 15.8 L0.8 15.8 Z" fill="none" stroke="#5a5a5a" stroke-width="1.2"/><path d="M3 3.2 L3 1 L9.6 1 L12.8 4.2 L12.8 13.6 L10.6 13.6" fill="none" stroke="#5a5a5a" stroke-width="1.2"/><path d="M7.4 3.2 L7.4 6.4 L10.6 6.4" fill="none" stroke="#5a5a5a" stroke-width="1.1"/><path d="M2.6 10.2 L5.6 10.2 M2.6 12.8 L8.6 12.8" stroke="#5a5a5a" stroke-width="1.1"/></svg><div class="t " style="left:1247px;top:476.69px;font-size:11px;color:#555;width:20px;text-align:center;">-</div><div class="t " style="left:1365px;top:476.69px;font-size:11px;color:#555;width:20px;text-align:center;">-</div><div class="t " style="left:1490.5px;top:476.69px;font-size:11px;color:#555;width:20px;text-align:center;">-</div><div class="b" style="left:394.5px;top:507.5px;width:14.5px;height:14.5px;border:1px solid #d3d6dc;border-radius:2px;background:#fff;"></div><div class="t " style="left:426.3px;top:510.69px;font-size:11px;color:#3d7fc6;letter-spacing:0.25px;">alexander</div><div class="t " style="left:560px;top:510.69px;font-size:11px;color:#555;letter-spacing:0.25px;">Session 3</div><div class="t " style="left:703px;top:510.69px;font-size:11px;color:#555;letter-spacing:0.4px;width:126px;text-align:center;">Not attempted</div><svg class="b" style="left:1066px;top:508px;" width="14" height="15" viewBox="0 0 14 15"><path d="M1.2 8.6 A5.3 5.3 0 1 0 6.6 3.3" fill="none" stroke="#5a5a5a" stroke-width="1.4"/><path d="M1.6 2.4 L6.9 0.4 L6.6 5.8 Z" fill="#5a5a5a"/></svg><svg class="b" style="left:1088px;top:504px;" width="16" height="20" viewBox="0 0 16 20"><path d="M12.3 10.8 A6 6 0 1 0 5.2 15.5" fill="none" stroke="#5a5a5a" stroke-width="1.25"/><path d="M5.8 7.0 L5.8 10.3 L9.0 10.3" fill="none" stroke="#5a5a5a" stroke-width="1.4"/><path d="M9.2 13.8 L12.8 13.8 M9.2 17.2 L13.2 17.2" stroke="#5a5a5a" stroke-width="1.1"/><path d="M7.9 13.8 L9.8 12.5 L9.8 15.1 Z M14.4 17.2 L12.5 15.9 L12.5 18.5 Z" fill="#5a5a5a"/></svg><svg class="b" style="left:1113px;top:507px;" width="14" height="17" viewBox="0 0 14 17"><rect x="4.6" y="0.8" width="4" height="2.4" fill="none" stroke="#5a5a5a" stroke-width="1.2"/><path d="M0.6 3.4 L12.6 3.4" stroke="#5a5a5a" stroke-width="1.4"/><path d="M1.8 3.4 L2.2 15.6 L11 15.6 L11.4 3.4" fill="none" stroke="#5a5a5a" stroke-width="1.3"/><path d="M5 5.8 L5 13.4 M8.2 5.8 L8.2 13.4" stroke="#5a5a5a" stroke-width="1.3"/></svg><svg class="b" style="left:1139.5px;top:508.8px;" width="13" height="13" viewBox="0 0 13 13"><circle cx="6.4" cy="6.2" r="5.5" fill="none" stroke="#5a5a5a" stroke-width="1.3"/><path d="M2.6 10 L10.2 2.4" stroke="#5a5a5a" stroke-width="1.3"/></svg><svg class="b" style="left:1162.5px;top:507px;" width="14" height="17" viewBox="0 0 14 17"><path d="M0.8 3.2 L7.4 3.2 L10.6 6.4 L10.6 15.8 L0.8 15.8 Z" fill="none" stroke="#5a5a5a" stroke-width="1.2"/><path d="M3 3.2 L3 1 L9.6 1 L12.8 4.2 L12.8 13.6 L10.6 13.6" fill="none" stroke="#5a5a5a" stroke-width="1.2"/><path d="M7.4 3.2 L7.4 6.4 L10.6 6.4" fill="none" stroke="#5a5a5a" stroke-width="1.1"/><path d="M2.6 10.2 L5.6 10.2 M2.6 12.8 L8.6 12.8" stroke="#5a5a5a" stroke-width="1.1"/></svg><div class="t " style="left:1247px;top:510.69px;font-size:11px;color:#555;width:20px;text-align:center;">-</div><div class="t " style="left:1365px;top:510.69px;font-size:11px;color:#555;width:20px;text-align:center;">-</div><div class="t " style="left:1490.5px;top:510.69px;font-size:11px;color:#555;width:20px;text-align:center;">-</div><div class="b" style="left:394.5px;top:541.5px;width:14.5px;height:14.5px;border:1px solid #d3d6dc;border-radius:2px;background:#fff;"></div><div class="t " style="left:426.3px;top:544.69px;font-size:11px;color:#3d7fc6;letter-spacing:0.25px;">barry</div><div class="t " style="left:560px;top:544.69px;font-size:11px;color:#555;letter-spacing:0.25px;">Session 3</div><div class="t " style="left:703px;top:544.69px;font-size:11px;color:#555;letter-spacing:0.4px;width:126px;text-align:center;">Not attempted</div><svg class="b" style="left:1066px;top:542px;" width="14" height="15" viewBox="0 0 14 15"><path d="M1.2 8.6 A5.3 5.3 0 1 0 6.6 3.3" fill="none" stroke="#5a5a5a" stroke-width="1.4"/><path d="M1.6 2.4 L6.9 0.4 L6.6 5.8 Z" fill="#5a5a5a"/></svg><svg class="b" style="left:1088px;top:538px;" width="16" height="20" viewBox="0 0 16 20"><path d="M12.3 10.8 A6 6 0 1 0 5.2 15.5" fill="none" stroke="#5a5a5a" stroke-width="1.25"/><path d="M5.8 7.0 L5.8 10.3 L9.0 10.3" fill="none" stroke="#5a5a5a" stroke-width="1.4"/><path d="M9.2 13.8 L12.8 13.8 M9.2 17.2 L13.2 17.2" stroke="#5a5a5a" stroke-width="1.1"/><path d="M7.9 13.8 L9.8 12.5 L9.8 15.1 Z M14.4 17.2 L12.5 15.9 L12.5 18.5 Z" fill="#5a5a5a"/></svg><svg class="b" style="left:1113px;top:541px;" width="14" height="17" viewBox="0 0 14 17"><rect x="4.6" y="0.8" width="4" height="2.4" fill="none" stroke="#5a5a5a" stroke-width="1.2"/><path d="M0.6 3.4 L12.6 3.4" stroke="#5a5a5a" stroke-width="1.4"/><path d="M1.8 3.4 L2.2 15.6 L11 15.6 L11.4 3.4" fill="none" stroke="#5a5a5a" stroke-width="1.3"/><path d="M5 5.8 L5 13.4 M8.2 5.8 L8.2 13.4" stroke="#5a5a5a" stroke-width="1.3"/></svg><svg class="b" style="left:1139.5px;top:542.8px;" width="13" height="13" viewBox="0 0 13 13"><circle cx="6.4" cy="6.2" r="5.5" fill="none" stroke="#5a5a5a" stroke-width="1.3"/><path d="M2.6 10 L10.2 2.4" stroke="#5a5a5a" stroke-width="1.3"/></svg><svg class="b" style="left:1162.5px;top:541px;" width="14" height="17" viewBox="0 0 14 17"><path d="M0.8 3.2 L7.4 3.2 L10.6 6.4 L10.6 15.8 L0.8 15.8 Z" fill="none" stroke="#5a5a5a" stroke-width="1.2"/><path d="M3 3.2 L3 1 L9.6 1 L12.8 4.2 L12.8 13.6 L10.6 13.6" fill="none" stroke="#5a5a5a" stroke-width="1.2"/><path d="M7.4 3.2 L7.4 6.4 L10.6 6.4" fill="none" stroke="#5a5a5a" stroke-width="1.1"/><path d="M2.6 10.2 L5.6 10.2 M2.6 12.8 L8.6 12.8" stroke="#5a5a5a" stroke-width="1.1"/></svg><div class="t " style="left:1247px;top:544.69px;font-size:11px;color:#555;width:20px;text-align:center;">-</div><div class="t " style="left:1365px;top:544.69px;font-size:11px;color:#555;width:20px;text-align:center;">-</div><div class="t " style="left:1490.5px;top:544.69px;font-size:11px;color:#555;width:20px;text-align:center;">-</div><div class="b" style="left:394.5px;top:576.5px;width:14.5px;height:14.5px;border:1px solid #d3d6dc;border-radius:2px;background:#fff;"></div><div class="t " style="left:426.3px;top:579.99px;font-size:11px;color:#3d7fc6;letter-spacing:0.38px;">student</div><div class="t " style="left:560px;top:579.99px;font-size:11px;color:#555;letter-spacing:0.1px;">General knowledge sessi…</div><div class="t " style="left:703px;top:579.99px;font-size:11px;color:#555;letter-spacing:0.33px;width:126px;text-align:center;">Report incomplete</div><div class="t " style="left:880px;top:579.99px;font-size:11px;color:#555;letter-spacing:0.15px;width:35px;text-align:right;">55.17</div><div class="b" style="left:945px;top:577px;width:72.5px;height:17px;border:1.3px solid #666;border-radius:9px;background:#f6f6f6;"></div><div class="t " style="left:945px;top:580.76px;font-size:9.5px;color:#555;letter-spacing:0.1px;width:72.5px;text-align:center;">Passed</div><svg class="b" style="left:1066px;top:577px;" width="14" height="15" viewBox="0 0 14 15"><path d="M1.2 8.6 A5.3 5.3 0 1 0 6.6 3.3" fill="none" stroke="#5a5a5a" stroke-width="1.4"/><path d="M1.6 2.4 L6.9 0.4 L6.6 5.8 Z" fill="#5a5a5a"/></svg><svg class="b" style="left:1088px;top:576.5px;" width="17" height="17" viewBox="0 0 17 17"><path d="M9 12.8 L9 16 L1 16 L1 1 L8.4 1 L12 4.6 L12 8" fill="none" stroke="#5a5a5a" stroke-width="1.2"/><path d="M8.4 1 L8.4 4.6 L12 4.6" fill="none" stroke="#5a5a5a" stroke-width="1.1"/><path d="M7.4 15.8 L7.8 13 L13.4 7.4 L15.6 9.6 L10 15.2 Z" fill="none" stroke="#5a5a5a" stroke-width="1.2"/></svg><svg class="b" style="left:1114.5px;top:577.5px;" width="12" height="17" viewBox="0 0 12 17"><rect x="0.4" y="9" width="2.6" height="7" fill="#5a5a5a"/><rect x="4.4" y="5" width="2.6" height="11" fill="#5a5a5a"/><rect x="8.4" y="1" width="2.6" height="15" fill="#5a5a5a"/></svg><svg class="b" style="left:1139.5px;top:577.8px;" width="13" height="13" viewBox="0 0 13 13"><circle cx="6.4" cy="6.2" r="5.5" fill="none" stroke="#5a5a5a" stroke-width="1.3"/><path d="M2.6 10 L10.2 2.4" stroke="#5a5a5a" stroke-width="1.3"/></svg><svg class="b" style="left:1162.5px;top:576px;" width="14" height="17" viewBox="0 0 14 17"><path d="M0.8 3.2 L7.4 3.2 L10.6 6.4 L10.6 15.8 L0.8 15.8 Z" fill="none" stroke="#5a5a5a" stroke-width="1.2"/><path d="M3 3.2 L3 1 L9.6 1 L12.8 4.2 L12.8 13.6 L10.6 13.6" fill="none" stroke="#5a5a5a" stroke-width="1.2"/><path d="M7.4 3.2 L7.4 6.4 L10.6 6.4" fill="none" stroke="#5a5a5a" stroke-width="1.1"/><path d="M2.6 10.2 L5.6 10.2 M2.6 12.8 L8.6 12.8" stroke="#5a5a5a" stroke-width="1.1"/></svg><div class="t " style="left:1237px;top:579.57px;font-size:11.5px;color:#6aa84f;width:40px;text-align:center;">Yes</div><div class="t " style="left:1355px;top:579.57px;font-size:11.5px;color:#e0393e;width:40px;text-align:center;">No</div><div class="t " style="left:1480.5px;top:579.57px;font-size:11.5px;color:#6aa84f;width:40px;text-align:center;">Yes</div><div class="b" style="left:384px;top:594.5px;width:1030px;height:6.5px;background:#a8c8e0;border-radius:4px;"></div><svg class="b" style="left:392px;top:613.5px;" width="12" height="10" viewBox="0 0 12 10"><path d="M0 1 L11 1 M0 3.6 L11 3.6 M0 6.2 L11 6.2 M0 8.8 L11 8.8" stroke="#555" stroke-width="1.6"/></svg><div class="t " style="left:408.5px;top:611.84px;font-size:12px;color:#666;letter-spacing:0.18px;">Displayed columns</div><svg class="b" style="left:874px;top:616px;" width="10" height="6" viewBox="0 0 10 6"><path d="M0.8 0.5 L0.8 5.5" stroke="#bbb" stroke-width="1"/><path d="M8.8 0.5 L3.5 3 L8.8 5.5 Z" fill="#bbb"/></svg><svg class="b" style="left:895px;top:616px;" width="10" height="6" viewBox="0 0 10 6"><path d="M4.5 0.5 L0.5 3 L4.5 5.5 M9 0.5 L5 3 L9 5.5" fill="none" stroke="#bbb" stroke-width="1.1"/></svg><div class="t " style="left:919.5px;top:613.42px;font-size:12.5px;color:#333;font-weight:bold;width:20px;text-align:center;">1</div><div class="b" style="left:918px;top:627.5px;width:25px;height:2.5px;background:#1b8ad3;"></div><svg class="b" style="left:960px;top:616px;" width="10" height="6" viewBox="0 0 10 6"><path d="M0.5 0.5 L4.5 3 L0.5 5.5 M5 0.5 L9 3 L5 5.5" fill="none" stroke="#bbb" stroke-width="1.1"/></svg><svg class="b" style="left:981px;top:616px;" width="10" height="6" viewBox="0 0 10 6"><path d="M0.5 0.5 L6 3 L0.5 5.5 Z" fill="#bbb"/><path d="M8.5 0.5 L8.5 5.5" stroke="#bbb" stroke-width="1"/></svg><div class="b" style="left:1008px;top:608.5px;width:40px;height:21.5px;border:1px solid #d7dce4;background:#fff;"></div><div class="t " style="left:1012.7px;top:613.84px;font-size:12px;color:#555;">10</div><svg class="b" style="left:1035.5px;top:615.5px;" width="9" height="6" viewBox="0 0 9 6"><path d="M1 1 L4.3 4.4 L7.6 1" fill="none" stroke="#444" stroke-width="1.5"/></svg><div class="t " style="left:1491.4px;top:613.04px;font-size:12px;color:#666;letter-spacing:0.1px;">Rows: 7</div><div class="b" style="left:383.5px;top:650px;width:84px;height:26.5px;border:1px solid #dfe4ec;border-radius:2px;background:#f6f8fb;"></div><div class="t " style="left:396.3px;top:656.84px;font-size:12px;color:#555;letter-spacing:0.35px;">Actions</div><svg class="b" style="left:443px;top:660.5px;" width="7" height="5" viewBox="0 0 7 5"><path d="M0 0.3 L6 0.3 L3 3.6 Z" fill="#777"/></svg><div class="b" style="left:475px;top:650px;width:107.5px;height:26.5px;border:1px solid #dfe4ec;border-radius:2px;background:#f6f8fb;"></div><div class="t " style="left:487.8px;top:656.84px;font-size:12px;color:#555;letter-spacing:0.1px;">Data Transfer</div><svg class="b" style="left:567.3px;top:660.5px;" width="7" height="5" viewBox="0 0 7 5"><path d="M0 0.3 L6 0.3 L3 3.6 Z" fill="#777"/></svg><div class="b" style="left:599px;top:655px;width:14.5px;height:14.5px;border:1px solid #d3d6dc;border-radius:2px;background:#fff;"></div><div class="t " style="left:622.6px;top:656.64px;font-size:12px;color:#3a3a3a;font-weight:bold;letter-spacing:-0.25px;">Show suspended attempts</div><div class="b" style="left:474.5px;top:677px;width:162px;height:77px;background:#fff;border:1px solid #e8ebf0;border-bottom:2px solid #8fb8d6;box-shadow:0 2px 4px rgba(0,0,0,0.12);"></div><div class="b" style="left:476px;top:702px;width:159px;height:1px;background:#f0f1f4;"></div><div class="b" style="left:476px;top:727.5px;width:159px;height:1px;background:#f0f1f4;"></div><div class="t " style="left:483.4px;top:685.03px;font-size:10px;color:#b5b5b5;letter-spacing:0.43px;">Import Scantron results</div><div class="t " style="left:483.4px;top:710.53px;font-size:10px;color:#444;letter-spacing:0.3px;">Send test results to LRS</div><div class="t " style="left:483.4px;top:736.53px;font-size:10px;color:#444;letter-spacing:0.43px;">Export direct testing links</div><div class="b" style="left:446px;top:649.2px;width:26px;height:26.5px;border-radius:50%;background:#de3b3c;box-shadow:0 1px 2px rgba(0,0,0,0.3);"></div><svg class="b" style="left:440px;top:645px;" width="40" height="40" viewBox="0 0 40 40"><path d="M460 670.8 L460 654.8 L455.2 658.2" transform="translate(-440,-645)" fill="none" stroke="#fff" stroke-width="2" stroke-linejoin="round"/></svg><div class="b" style="left:446px;top:727.4px;width:26px;height:26.2px;border-radius:50%;background:#de3b3c;box-shadow:0 1px 2px rgba(0,0,0,0.3);"></div><svg class="b" style="left:440px;top:722px;" width="40" height="40" viewBox="0 0 40 40"><path d="M454.2 737.4 Q454.2 733.2 458.2 733.2 Q462.2 733.2 462.2 737 Q462.2 739.2 459.8 741.6 L454 747.2 L463.2 747.2" transform="translate(-440,-722)" fill="none" stroke="#fff" stroke-width="1.9" stroke-linejoin="round"/></svg><svg class="b" style="left:1457px;top:650px;" width="20" height="25" viewBox="0 0 20 25"><path d="M1 1 L12 1 L18 7 L18 23 L1 23 Z" fill="#fafafa" stroke="#dcdcdc" stroke-width="1"/><path d="M12 1 L12 7 L18 7" fill="#eee" stroke="#dcdcdc" stroke-width="0.8"/><path d="M3.5 6 L15 6" stroke="#c8c8c8" stroke-width="1.4" stroke-dasharray="3 1.3"/><path d="M3.5 9 L15 9" stroke="#c8c8c8" stroke-width="1.4" stroke-dasharray="3 1.3"/><path d="M3.5 20 L15 20" stroke="#c8c8c8" stroke-width="1.4" stroke-dasharray="3 1.3"/><circle cx="9.8" cy="14.8" r="6.2" fill="#1d7a46"/><path d="M6.6 14.8 L9 17.2 L13.2 12.6" fill="none" stroke="#fff" stroke-width="1.8"/></svg><svg class="b" style="left:1487px;top:650px;" width="20" height="25" viewBox="0 0 20 25"><path d="M1 1 L12 1 L18 7 L18 23 L1 23 Z" fill="#fafafa" stroke="#dcdcdc" stroke-width="1"/><path d="M12 1 L12 7 L18 7" fill="#eee" stroke="#dcdcdc" stroke-width="0.8"/><path d="M3.5 6 L15 6" stroke="#8a8a8a" stroke-width="1.4" stroke-dasharray="3 1.3"/><path d="M3.5 9 L15 9" stroke="#8a8a8a" stroke-width="1.4" stroke-dasharray="3 1.3"/><path d="M3.5 20 L15 20" stroke="#8a8a8a" stroke-width="1.4" stroke-dasharray="3 1.3"/><rect x="0" y="10.5" width="20" height="7.5" fill="#1f7d45"/><text x="10" y="16.6" font-size="6.8" font-weight="bold" font-family="Liberation Sans" fill="#bff2cf" text-anchor="middle">XLS</text></svg><svg class="b" style="left:1514px;top:650px;" width="20" height="25" viewBox="0 0 20 25"><path d="M1 1 L12 1 L18 7 L18 23 L1 23 Z" fill="#f7f7f7" stroke="#e0e0e0" stroke-width="1"/><path d="M12 1 L12 7 L18 7" fill="#eee" stroke="#dcdcdc" stroke-width="0.8"/><rect x="0" y="11" width="20" height="8.5" fill="#c51a1a"/><text x="10" y="17.8" font-size="7" font-weight="bold" font-family="Liberation Sans" fill="#ffe5e5" text-anchor="middle">PDF</text></svg>
</body></html>
